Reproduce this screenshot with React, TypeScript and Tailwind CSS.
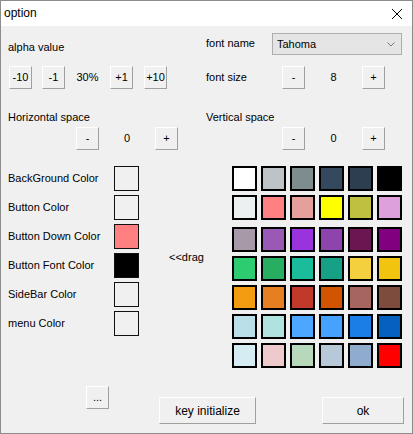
import React from "react";

const palette: string[][] = [
  ["#ffffff", "#bdc3c7", "#7f8c8d", "#34495e", "#2c3e50", "#000000"],
  ["#ecf0f1", "#ff8080", "#e6a09c", "#ffff00", "#bfbf40", "#dda0dd"],
  ["#a899a8", "#9b59b6", "#9933dd", "#8e44ad", "#6b1650", "#800080"],
  ["#2ecc71", "#27ae60", "#1abc9c", "#16a085", "#f4d03f", "#f1c40f"],
  ["#f39c12", "#e67e22", "#c0392b", "#d35400", "#a7655f", "#7e4c3d"],
  ["#badfe8", "#b0e3e0", "#4da6ff", "#45a3ff", "#1b7ee6", "#0560bf"],
  ["#d6ecf3", "#efcacc", "#b8d8bb", "#b7c8d9", "#8facce", "#ff0000"],
];

const colorRows: { label: string; color: string }[] = [
  { label: "BackGround Color", color: "#f0f0f0" },
  { label: "Button Color", color: "#f0f0f0" },
  { label: "Button Down Color", color: "#ff8080" },
  { label: "Button Font Color", color: "#000000" },
  { label: "SideBar Color", color: "#f0f0f0" },
  { label: "menu Color", color: "#f0f0f0" },
];

function Btn({ children, className = "" }: { children: React.ReactNode; className?: string }) {
  return (
    <div
      className={
        "flex items-center justify-center bg-[#f0f0f0] border-t border-l border-t-white border-l-white border-b border-r border-b-[#a0a0a0] border-r-[#a0a0a0] text-[11px] leading-none text-black " +
        className
      }
    >
      {children}
    </div>
  );
}

export default function App() {
  return (
    <div
      className="w-[413px] h-[434px] border border-[#8c8c8c] bg-[#f0f0f0] flex flex-col overflow-hidden text-black"
      style={{ fontFamily: '"Liberation Sans", Arial, sans-serif' }}
    >
      {/* title bar */}
      <div className="h-[25px] bg-white flex items-center justify-between shrink-0">
        <span className="pl-[3px] text-[12px] leading-none pb-[1px]">option</span>
        <svg width="12" height="12" viewBox="0 0 12 12" className="mr-[9px] mt-[1px]">
          <path d="M1 1 L11 11 M11 1 L1 11" stroke="#000" strokeWidth="1" />
        </svg>
      </div>

      <div className="flex flex-col text-[11px] leading-none">
        {/* Row A */}
        <div className="flex h-[22px] mt-[7px]">
          <div className="w-[205px] pl-[7px] pt-[9px]">alpha value</div>
          <div className="w-[66px] pt-[5px]">font name</div>
          <div className="w-[130px] h-[22px] bg-[#e5e5e5] border border-[#adadad] flex items-center justify-between pl-[4px] pr-[6px]">
            <span className="text-[11px]">Tahoma</span>
            <svg width="8" height="5" viewBox="0 0 8 5">
              <path d="M0.5 0.5 L4 4 L7.5 0.5" stroke="#777" fill="none" strokeWidth="1" />
            </svg>
          </div>
        </div>

        {/* Row B */}
        <div className="flex h-[23px] mt-[11px] items-center">
          <div className="w-[205px] flex items-center pl-[8px]">
            <Btn className="w-[23px] h-[23px]">-10</Btn>
            <Btn className="w-[23px] h-[23px] ml-[10px]">-1</Btn>
            <div className="w-[45px] text-center">30%</div>
            <Btn className="w-[23px] h-[23px]">+1</Btn>
            <Btn className="w-[23px] h-[23px] ml-[11px]">+10</Btn>
          </div>
          <div className="w-[76px]">font size</div>
          <Btn className="w-[23px] h-[23px]">-</Btn>
          <div className="w-[57px] text-center">8</div>
          <Btn className="w-[23px] h-[23px]">+</Btn>
        </div>

        {/* Row C */}
        <div className="flex mt-[23px]">
          <div className="w-[205px] pl-[7px]">Horizontal space</div>
          <div>Vertical space</div>
        </div>

        {/* Row D */}
        <div className="flex h-[23px] mt-[4px] items-center">
          <div className="w-[205px] flex items-center pl-[75px]">
            <Btn className="w-[23px] h-[23px]">-</Btn>
            <div className="w-[56px] text-center">0</div>
            <Btn className="w-[23px] h-[23px]">+</Btn>
          </div>
          <div className="w-[76px]"></div>
          <Btn className="w-[23px] h-[23px]">-</Btn>
          <div className="w-[57px] text-center">0</div>
          <Btn className="w-[23px] h-[23px]">+</Btn>
        </div>

        {/* Color section */}
        <div className="flex mt-[16px]">
          <div className="flex flex-col gap-[4px] pl-[7px]">
            {colorRows.map((r) => (
              <div key={r.label} className="flex items-center h-[25px]">
                <div className="w-[106px]">{r.label}</div>
                <div className="w-[25px] h-[25px] border border-[#111]" style={{ backgroundColor: r.color }} />
              </div>
            ))}
          </div>
          <div className="w-[93px] pl-[30px] pt-[86px]">&lt;&lt;drag</div>
          <div className="flex flex-col">
            {palette.map((row, i) => (
              <div key={i} className={"flex gap-[4px] " + (i === 0 ? "" : i === 2 ? "mt-[7px]" : "mt-[4px]")}>
                {row.map((c, j) => (
                  <div key={j} className="w-[25px] h-[25px] border-2 border-black" style={{ backgroundColor: c }} />
                ))}
              </div>
            ))}
          </div>
        </div>

        {/* Bottom */}
        <div className="flex items-start mt-[18px]">
          <Btn className="w-[23px] h-[23px] ml-[85px] text-[#000080]">...</Btn>
          <Btn className="w-[97px] h-[27px] ml-[50px] mt-[11px] text-[12px]">key initialize</Btn>
          <Btn className="w-[82px] h-[27px] ml-[66px] mt-[11px] text-[12px]">ok</Btn>
        </div>
      </div>
    </div>
  );
}
